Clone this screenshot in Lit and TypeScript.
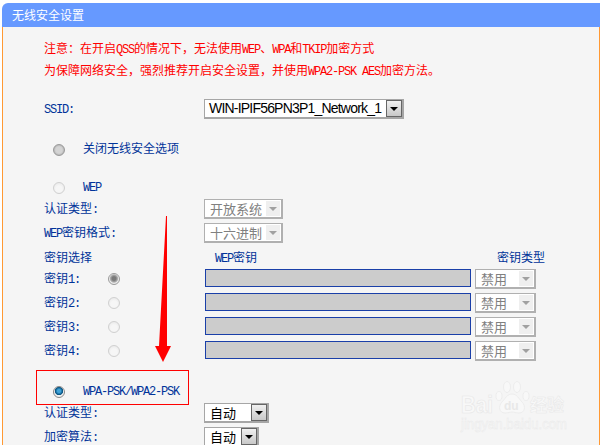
import { LitElement, html, css, svg } from "lit";
import { customElement } from "lit/decorators.js";

const L = (t: string) => html`<span class="l">${t}</span>`;
const FC = "\uFF1A";
const FK = "\uFF0C";

@customElement("app-root")
export class AppRoot extends LitElement {
  static styles = css`
    :host { display: block; width: 601px; height: 445px; overflow: hidden; background: #fff;
      font: 12px/20px "Noto Sans CJK SC", sans-serif; color: #003399; }
    .frame { position: relative; height: 442px; margin: 3px 1px 0 2px; }
    .title { height: 24px; background: #6699ff; color: #fff; border-radius: 6px 0 0 0;
      padding-left: 10px; line-height: 24px; font-size: 12px; }
    .panel { height: 418px; box-sizing: border-box; background: #f5f5f5; border-left: 1px solid #ff9933;
      border-right: 1px solid #ff9933; padding: 10px 0 0 41px; overflow: hidden; }
    .l { font-family: "Liberation Mono", monospace; letter-spacing: -1.2px; line-height: 1; }
    .notice { color: #f00; line-height: 22px; white-space: nowrap; margin-bottom: 18px; }
    .row { display: flex; align-items: center; height: 20px; white-space: nowrap; }
    .lab { width: 160px; flex: none; padding-bottom: 2px; box-sizing: border-box; }
    .opt { padding-left: 9px; gap: 18px; }
    .opt span.t { padding-bottom: 4px; }
    .m-off { margin-top: 21px; }
    .m-wep { margin-top: 18px; }
    .m-1 { margin-top: 1px; }
    .m-2 { margin-top: 2px; }
    .m-4 { margin-top: 4px; }
    .radio { width: 12px; height: 12px; border-radius: 50%; box-sizing: border-box; flex: none;
      border: 1px solid #b8b8b8; background: radial-gradient(circle at 50% 60%, #f4f4f4 40%, #d8d8d8 100%); }
    .radio.dim { border-color: #d0d0d0; background: radial-gradient(circle at 50% 60%, #f6f6f6 40%, #e4e4e4 100%); }
    .radio.grey { border-color: #999; background: radial-gradient(circle, #d4d4d4 0 45%, #b4b4b4 75%, #e4e4e4 100%); }
    .radio.dot { border-color: #9a9a9a; background: radial-gradient(circle at 50% 45%, #7a7a7a 0 25%, #b0b0b0 50%, #ececec 62%); }
    .radio.on { border-color: #888; background: radial-gradient(circle at 50% 40%, #3fa3d8 0 20%, #04507f 48%, #f0f0f0 58%); }
    .sel { display: flex; height: 20px; box-sizing: border-box; background: #fff; flex: none;
      border: 1px solid #a6a6a6; border-width: 1px 2px 2px 1px; font-size: 13px; line-height: 17px; color: #000; padding-left: 5px; justify-content: space-between; }
    .sel .btn { width: 16px; margin-left: 2px; box-sizing: border-box; border: 1px solid #666; flex: none;
      background: linear-gradient(#f0f0f0, #c8c8c8); display: flex; align-items: center; justify-content: center; }
    .sel .arrow { width: 0; height: 0; border: 4px solid transparent; border-top: 4px solid #000; border-bottom: 0; }
    .sel.off { color: #808080; border-color: #b0b0b0; }
    .sel.off .btn { border: 1px solid #fff; background: #efefef; }
    .sel.off .arrow { border-top-color: #a0a0a0; }
    .ssid { width: 200px; font: 14px/17px "Liberation Sans", sans-serif; letter-spacing: -0.8px; padding-left: 4px; }
    .w79 { width: 79px; } .w65 { width: 65px; } .w55 { width: 55px; } .w61 { width: 61px; }
    .head .a { width: 171px; flex: none; } .head .b { width: 282px; flex: none; }
    .k { width: 64px; flex: none; padding-bottom: 2px; }
    .inp { width: 266px; height: 18px; margin: 0 4px 2px 0; box-sizing: border-box; background: #ccc;
      border: 1px solid #1a3fa8; flex: none; }
    .k-gap { width: 85px; flex: none; }
    .box { width: 153px; height: 35px; box-sizing: border-box; border: 1px solid #f00; margin: 9px 0 -2px -8px;
      display: flex; align-items: center; gap: 18px; padding: 9px 0 0 16px; }
    .box .t { padding-bottom: 4px; }
    .over { position: absolute; left: 0; top: 0; pointer-events: none; }
    .wm-b { font: bold 24px "Liberation Sans", sans-serif; fill: #f8f8f8; stroke: #e8e8e8; stroke-width: 0.7; }
    .wm-d { font: bold 12px "Liberation Sans", sans-serif; fill: #e8e8e8; }
    .wm-c { font: bold 17px "Noto Sans CJK SC", sans-serif; fill: #f8f8f8; stroke: #e8e8e8; stroke-width: 0.5; }
    .wm-u { font: 14px "Liberation Sans", sans-serif; fill: #f8f8f8; stroke: #e8e8e8; stroke-width: 0.4; }
  `;

  private sel(text: unknown, cls: string) {
    return html`<div class="sel ${cls}"><span>${text}</span><span class="btn"><i class="arrow"></i></span></div>`;
  }

  render() {
    const keys = [1, 2, 3, 4];
    return html`
      <div class="frame">
        <div class="title">无线安全设置</div>
        <div class="panel">
          <div class="notice">
            <div>注意${FC}在开启${L("QSS")}的情况下${FK}无法使用${L("WEP")}、${L("WPA")}和${L("TKIP")}加密方式</div>
            <div>为保障网络安全${FK}强烈推荐开启安全设置${FK}并使用${L("WPA2-PSK AES")}加密方法。</div>
          </div>
          <div class="row"><span class="lab">${L("SSID:")}</span>${this.sel("WIN-IPIF56PN3P1_Network_1", "ssid")}</div>
          <div class="row opt m-off"><i class="radio grey"></i><span class="t">关闭无线安全选项</span></div>
          <div class="row opt m-wep"><i class="radio dim"></i><span class="t">${L("WEP")}</span></div>
          <div class="row m-1"><span class="lab">认证类型${L(":")}</span>${this.sel("开放系统", "off w79")}</div>
          <div class="row m-4"><span class="lab">${L("WEP")}密钥格式${L(":")}</span>${this.sel("十六进制", "off w79")}</div>
          <div class="row m-4 head"><span class="a">密钥选择</span><span class="b">${L("WEP")}密钥</span><span>密钥类型</span></div>
          ${keys.map(
            (k, i) => html`<div class="row ${i ? "m-4" : "m-2"}">
              <span class="k">密钥${L(k + ":")}</span>
              <i class="radio ${k === 1 ? "dot" : "dim"}"></i>
              <span class="k-gap"></span>
              <div class="inp"></div>
              ${this.sel("禁用", "off w61")}
            </div>`
          )}
          <div class="box"><i class="radio on"></i><span class="t">${L("WPA-PSK/WPA2-PSK")}</span></div>
          <div class="row"><span class="lab">认证类型${L(":")}</span>${this.sel("自动", "w65")}</div>
          <div class="row m-4"><span class="lab">加密算法${L(":")}</span>${this.sel("自动", "w55")}</div>
        </div>
        <svg class="over" width="599" height="442" viewBox="2 3 599 442">
          ${svg`
          <polygon points="166,216 167,216 167,346 171,346 163,362 155,346 159,346" fill="#f00"/>
          <g>
            <text class="wm-b" x="461" y="413" textLength="32" lengthAdjust="spacingAndGlyphs">Bai</text>
            <ellipse cx="499" cy="396" rx="3" ry="4.5" class="wm-b" />
            <ellipse cx="507" cy="387" rx="3.5" ry="5.5" class="wm-b" />
            <ellipse cx="517" cy="387" rx="3.5" ry="5.5" class="wm-b" />
            <ellipse cx="526" cy="396" rx="3" ry="4.5" class="wm-b" />
            <path d="M512 394c5 0 7 5 10 8 4 4 3 11-3 11-3 0-5-1-7-1s-4 1-7 1c-6 0-7-7-3-11 3-3 5-8 10-8z" class="wm-b"/>
            <text class="wm-d" x="504" y="410">du</text>
            <text class="wm-c" x="530" y="411">经验</text>
            <text class="wm-u" x="461" y="429" textLength="106" lengthAdjust="spacingAndGlyphs">jingyan.baidu.com</text>
          </g>`}
        </svg>
      </div>
    `;
  }
}
